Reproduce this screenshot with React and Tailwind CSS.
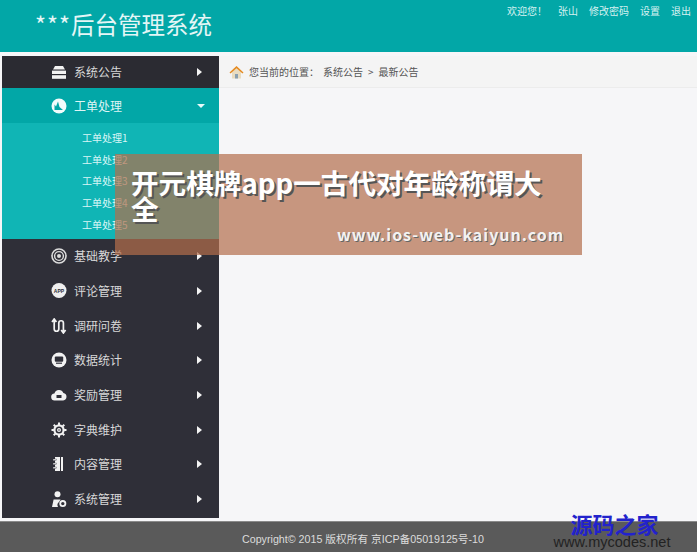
import React from "react";

const cjk = "font-['Noto_Sans_CJK_SC','Liberation_Sans',sans-serif]";

const StackIcon = () => (
  <svg width="16" height="13" viewBox="0 0 16 13" fill="#f2f2f2">
    <path d="M4 0h8l2 3.6H2z" />
    <rect x="1" y="4.6" width="14" height="3.4" />
    <rect x="1" y="9.2" width="14" height="3.6" />
  </svg>
);

const ChartIcon = () => (
  <svg width="16" height="16" viewBox="0 0 16 16">
    <circle cx="8" cy="8" r="7.5" fill="#f2fbfb" />
    <path d="M3.5 12V6.5l1.5 2 2-5 1.5 5.5 3.5 3z" fill="#02a7a7" />
  </svg>
);

const TargetIcon = () => (
  <svg width="16" height="16" viewBox="0 0 16 16" fill="none" stroke="#dcdcdc">
    <circle cx="8" cy="8" r="7" strokeWidth="1.6" />
    <circle cx="8" cy="8" r="4.4" strokeWidth="1.4" />
    <circle cx="8" cy="8" r="2" fill="#dcdcdc" stroke="none" />
  </svg>
);

const AppIcon = () => (
  <svg width="16" height="16" viewBox="0 0 16 16">
    <circle cx="8" cy="7.5" r="7.5" fill="#efefef" />
    <text x="8" y="9.5" textAnchor="middle" fontSize="5" fontWeight="700" fontFamily="Liberation Sans" fill="#2f2f38">APP</text>
  </svg>
);

const ArrowsIcon = () => (
  <svg width="16" height="16" viewBox="0 0 16 16" fill="none" stroke="#f2f2f2" strokeWidth="1.7">
    <path d="M1 4l2.2-3L5.4 4M3.2 1v10c0 3 4.6 3 4.6 0V5c0-3 4.6-3 4.6 0v10M10.2 12l2.2 3 2.2-3" />
  </svg>
);

const ScreenIcon = () => (
  <svg width="16" height="16" viewBox="0 0 16 16">
    <circle cx="8" cy="8" r="7.5" fill="#f2f2f2" />
    <rect x="3.8" y="4.5" width="8.4" height="5.2" rx="1" fill="#2f2f38" />
    <rect x="5" y="10.6" width="6" height="1.2" fill="#2f2f38" />
  </svg>
);

const CloudIcon = () => (
  <svg width="16" height="12" viewBox="0 0 16 12">
    <path d="M4 11.5a3.5 3.5 0 0 1-.6-7A4.8 4.8 0 0 1 12.4 4a3.8 3.8 0 0 1-.2 7.5z" fill="#f2f2f2" />
    <rect x="5.5" y="6" width="5" height="3" fill="#2f2f38" />
  </svg>
);

const GearIcon = () => (
  <svg width="16" height="16" viewBox="0 0 16 16" fill="none" stroke="#f2f2f2">
    <circle cx="8" cy="8" r="4.6" strokeWidth="2.2" />
    <circle cx="8" cy="8" r="1.4" strokeWidth="1.2" />
    <path d="M8 0.5v2.4M8 13.1v2.4M0.5 8h2.4M13.1 8h2.4M2.7 2.7l1.7 1.7M11.6 11.6l1.7 1.7M13.3 2.7l-1.7 1.7M4.4 11.6l-1.7 1.7" strokeWidth="2" />
  </svg>
);

const BookIcon = () => (
  <svg width="16" height="16" viewBox="0 0 16 16" fill="#f2f2f2">
    <rect x="4" y="1" width="8" height="14" />
    <rect x="9" y="1" width="1" height="14" fill="#2f2f38" />
    <rect x="2" y="3" width="3.5" height="1.6" stroke="#2f2f38" strokeWidth="0.4" />
    <rect x="2" y="7" width="3.5" height="1.6" stroke="#2f2f38" strokeWidth="0.4" />
    <rect x="2" y="11" width="3.5" height="1.6" stroke="#2f2f38" strokeWidth="0.4" />
  </svg>
);

const UserGearIcon = () => (
  <svg width="16" height="17" viewBox="0 0 16 17" fill="#f2f2f2">
    <circle cx="6.5" cy="3.2" r="3" />
    <path d="M1 16l1.6-7.5h7L8 11a4 4 0 0 0-1 5z" />
    <circle cx="11.8" cy="12.6" r="2.6" fill="none" stroke="#f2f2f2" strokeWidth="1.8" />
  </svg>
);

const HouseIcon = () => (
  <svg width="15" height="14" viewBox="0 0 15 14">
    <path d="M3 7v6.5h9V7L7.5 3z" fill="#e9dcc0" />
    <rect x="6" y="9" width="3" height="4.5" fill="#8aa0b0" />
    <path d="M0.5 7.5L7.5 1l7 6.5-1 1-6-5.2-6 5.2z" fill="#e58a1f" />
  </svg>
);

const CaretRight = () => (
  <span className="ml-[1px] w-0 h-0 border-y-[4px] border-y-transparent border-l-[5px] border-l-[#f4f4f4]" />
);

const CaretDown = () => (
  <span className="ml-[1px] w-0 h-0 border-x-[4px] border-x-transparent border-t-[4px] border-t-[#e8fbfb]" />
);

const MenuRow = ({ icon, label, active, first }) => (
  <div
    className={`flex items-center pl-[49px] ${first ? "h-[32px] bg-[#2b2b32]" : active ? "h-[35px] bg-[#02a7a7]" : "h-[34.7px]"} ${active ? "text-[#dff5f5]" : "text-[#d8d8d8]"}`}
  >
    <span className="w-[16px] flex justify-center">{icon}</span>
    <span className="ml-[7px] w-[122px] text-[12px]">{label}</span>
    {active ? <CaretDown /> : <CaretRight />}
  </div>
);

const lowerMenu = [
  [<TargetIcon />, "基础教学"],
  [<AppIcon />, "评论管理"],
  [<ArrowsIcon />, "调研问卷"],
  [<ScreenIcon />, "数据统计"],
  [<CloudIcon />, "奖励管理"],
  [<GearIcon />, "字典维护"],
  [<BookIcon />, "内容管理"],
  [<UserGearIcon />, "系统管理"],
];

const subMenu = ["工单处理1", "工单处理2", "工单处理3", "工单处理4", "工单处理5"];

export default function App() {
  return (
    <div className={`relative w-[697px] h-[552px] overflow-hidden flex flex-col bg-[#f6f6f8] ${cjk}`}>
      <header className="h-[52px] shrink-0 bg-[#02a7a7] flex justify-between">
        <h1 className="pl-[35px] pt-[7px] text-[23.5px] leading-[34px] text-[#e4f6f6]">
          <span className="tracking-[1px]">***</span>后台管理系统
        </h1>
        <nav className="flex gap-[11px] pr-[6px] pt-[3px] text-[10px] leading-[15px] text-[#d5f1f1]">
          <span>欢迎您！</span>
          <span>张山</span>
          <span>修改密码</span>
          <span>设置</span>
          <span>退出</span>
        </nav>
      </header>

      <div className="flex flex-1 pt-[4px] pl-[2px]">
        <aside className="w-[217px] h-[462px] shrink-0 bg-[#2f2f38]">
          <MenuRow first icon={<StackIcon />} label="系统公告" />
          <MenuRow active icon={<ChartIcon />} label="工单处理" />
          <div className="h-[116px] bg-[#10b5b5] py-[4px] pl-[80px] text-[10px] leading-[21.7px] text-[#d9f6f6]">
            {subMenu.map((item) => (
              <div key={item}>{item}</div>
            ))}
          </div>
          {lowerMenu.map(([icon, label]) => (
            <MenuRow key={label} icon={icon} label={label} />
          ))}
        </aside>

        <main className="flex-1">
          <div className="h-[32px] flex items-center pl-[10px] bg-[#f4f4f4] border-b border-[#ececec] text-[10px] text-[#555555]">
            <HouseIcon />
            <span className="ml-[5px]">您当前的位置：</span>
            <span className="ml-[4px]">系统公告</span>
            <span className="mx-[5px]">&gt;</span>
            <span>最新公告</span>
          </div>
        </main>
      </div>

      <footer className="h-[31px] shrink-0 mt-[3px] bg-[#5a5a5a] border-t border-[#8a8a8a] pl-[242px] pt-[8px] text-[10.7px] leading-[18px] text-[#dcdcdc] font-['Liberation_Sans','Noto_Sans_CJK_SC',sans-serif]">
        Copyright© 2015 版权所有 京ICP备05019125号-10
      </footer>

      {/* watermark in the bottom corner */}
      <div className="absolute left-[550px] top-[512px] w-[124px] text-center">
        <div className="pl-[5px] text-[22px] leading-[23px] font-bold text-[#2222cc]">源码之家</div>
        <div className="text-[14.5px] leading-[14px] text-[#222222] font-['Liberation_Sans',sans-serif]">www.mycodes.net</div>
      </div>

      {/* ad banner lying over the page */}
      <div className="absolute left-[115px] top-[154px] w-[467px] h-[101px] bg-[rgba(180,110,76,0.7)] pl-[16px] pt-[15px]">
        <div className="w-[420px] text-[27.6px] leading-[26px] font-bold text-white [text-shadow:2px_2px_0_#555]">
          开元棋牌app一古代对年龄称谓大全
        </div>
        <div className="absolute left-[222px] top-[72px] whitespace-nowrap text-[16px] leading-[16px] tracking-[1px] text-[#f2f2f2] font-bold [text-shadow:1px_1px_0_#666]">
          www.ios-web-kaiyun.com
        </div>
      </div>
    </div>
  );
}
